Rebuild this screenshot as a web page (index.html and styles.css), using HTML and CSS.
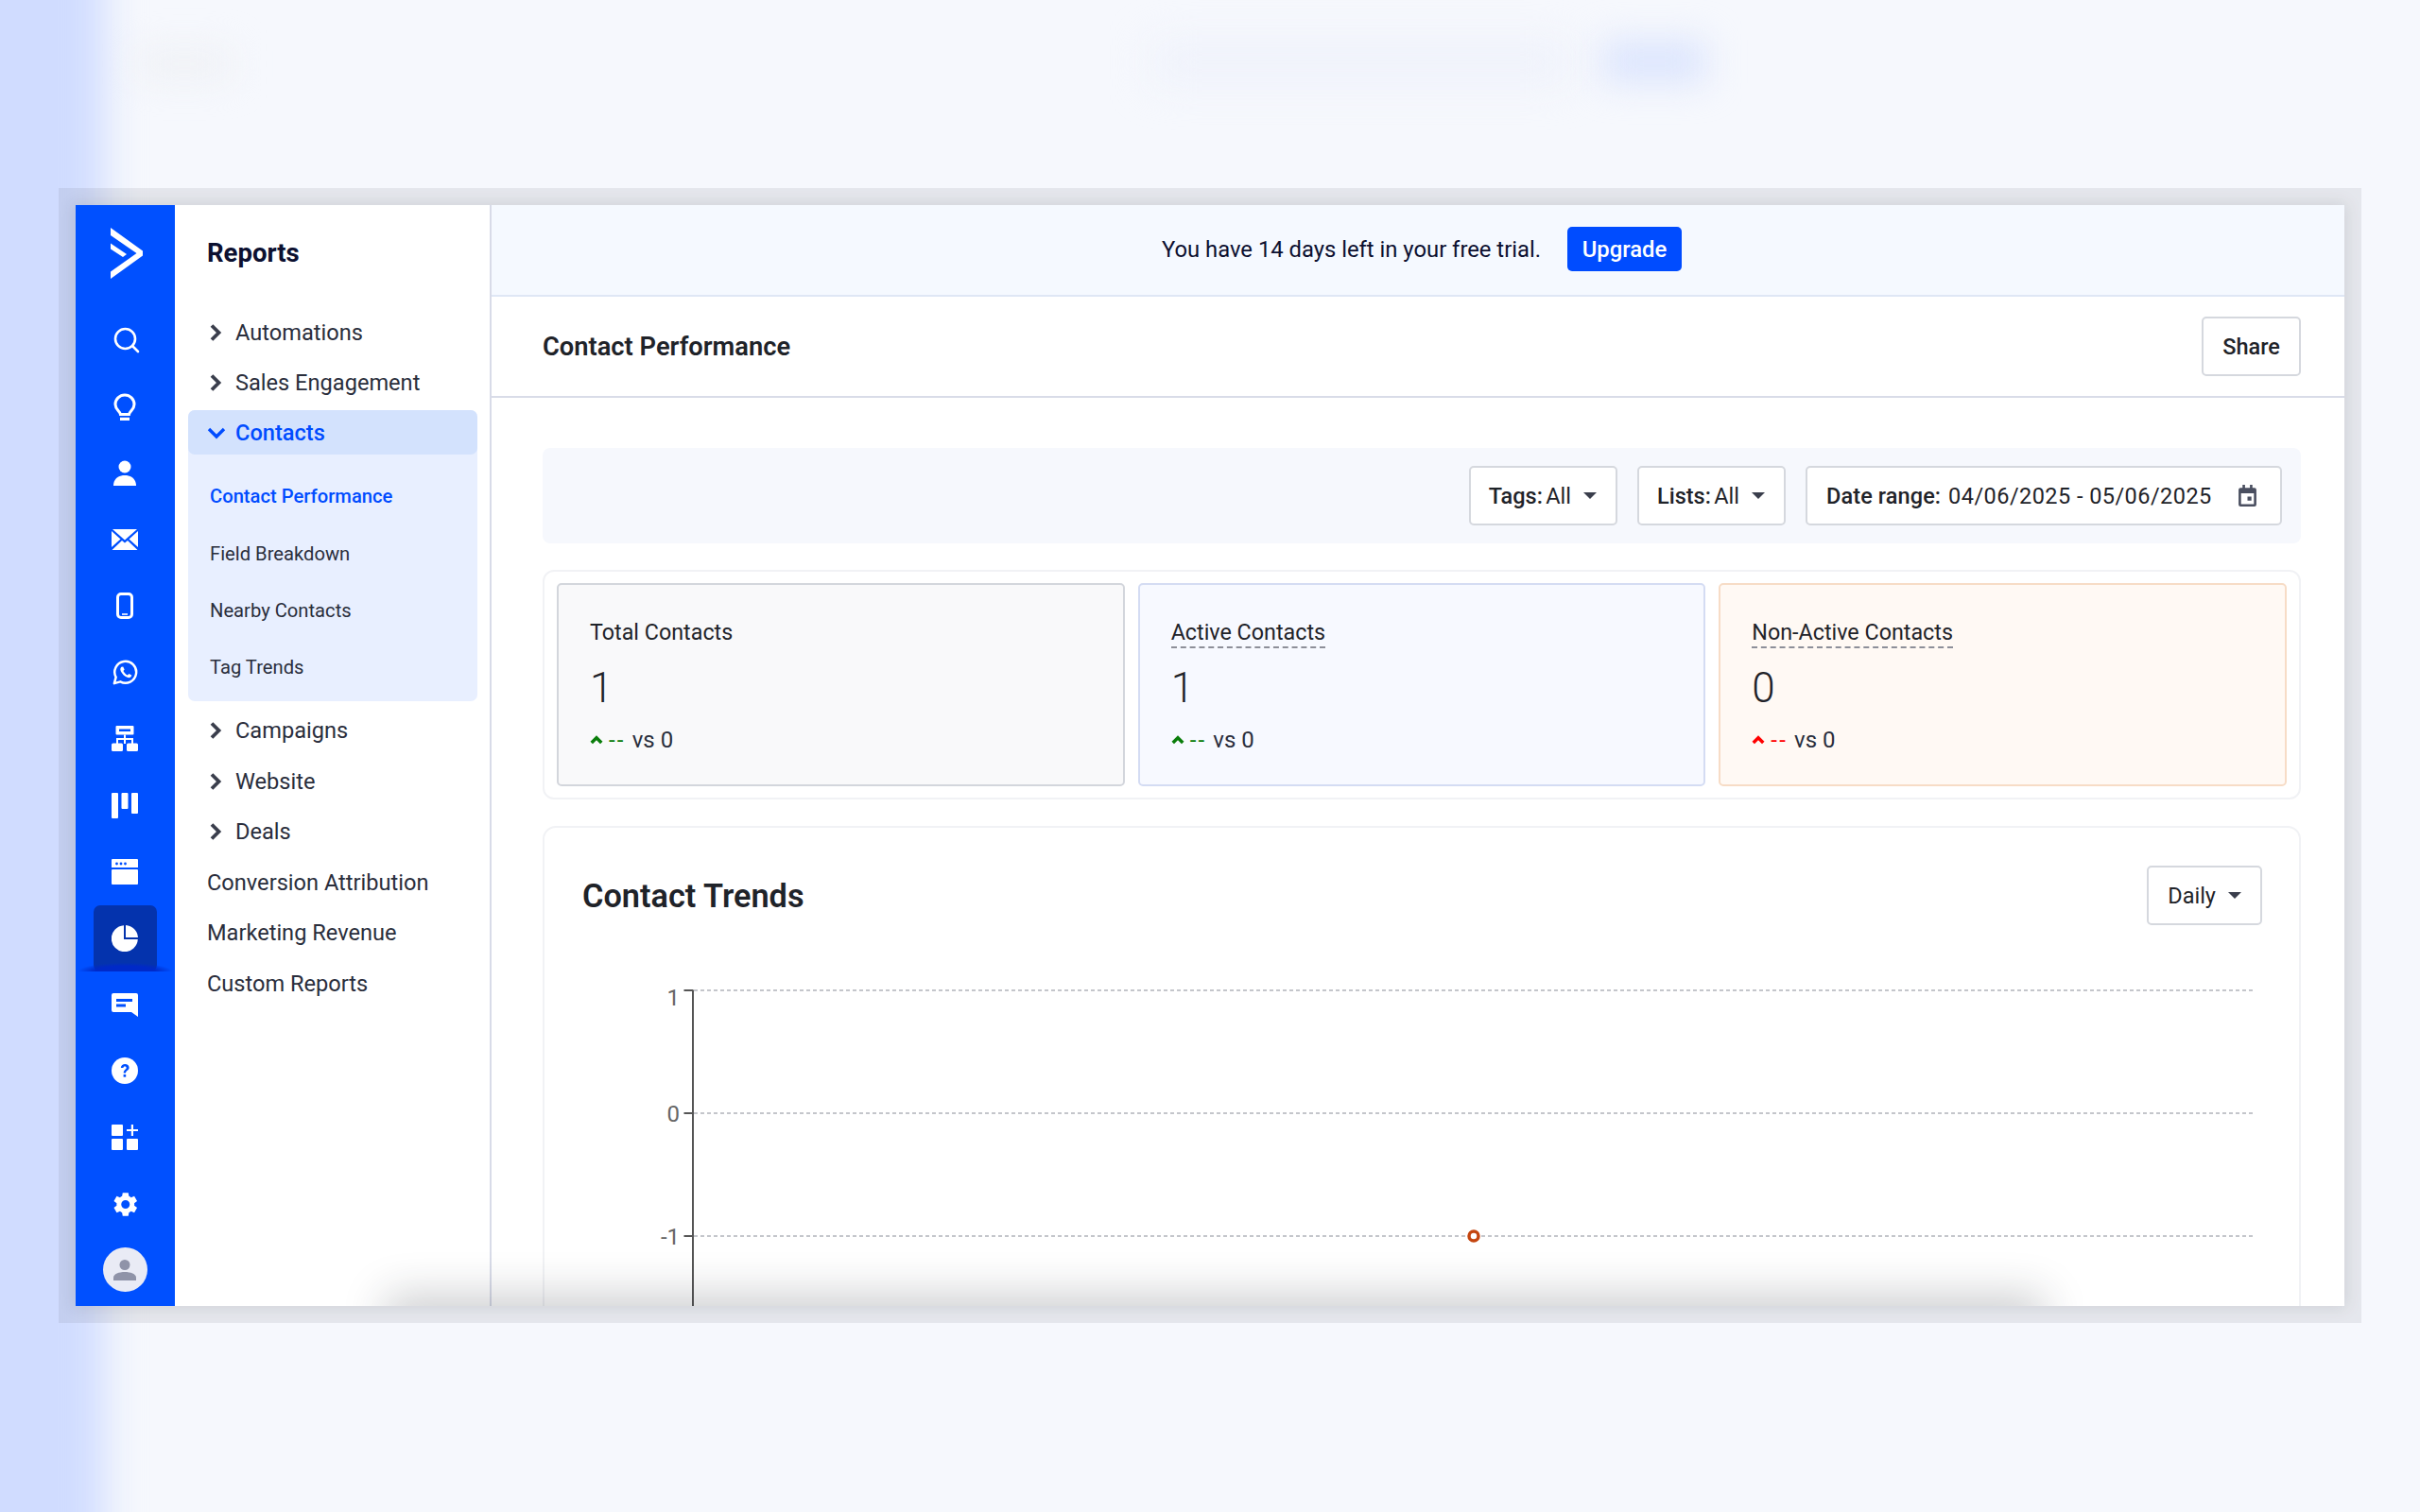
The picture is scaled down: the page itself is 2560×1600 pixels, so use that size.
FILE: index.html
```html
<!DOCTYPE html>
<html lang="en">
<head>
    <meta charset="UTF-8">
    <meta name="viewport" content="width=device-width, initial-scale=1.0">
    <title>Contact Performance</title>
    <link rel="stylesheet" href="styles.css">
</head>
<body>
    <!-- blurred page behind the card -->
    <div class="blur blur-rail"></div>
    <div class="blur blur-title"></div>
    <div class="blur blur-text"></div>
    <div class="blur blur-button"></div>

    <div class="card">
        <nav class="rail">
            <a class="rail-logo" href="#">
                <svg width="34" height="54" viewBox="0 0 34 54" fill="#fff"><path d="M0 0 34 24.5V29.5L0 54V46.5L27.5 27 0 8Z"/><path d="M0 16.5 17 28 13 31 0 22.5Z"/></svg>
            </a>
            <a class="rail-item rail-search" href="#">
                <svg width="30" height="30" viewBox="0 0 30 30" fill="none" stroke="#fff" stroke-width="2.6" stroke-linecap="round"><circle cx="13.5" cy="13.5" r="10.5"/><path d="M21.5 21.5 27 27"/></svg>
            </a>
            <a class="rail-item" href="#">
                <svg width="28" height="30" viewBox="0 -2 28 30" fill="none" stroke="#fff" stroke-width="3"><path d="M9.5 21.5C9 18 4 16.5 4 11A10 10 0 0 1 24 11C24 16.5 19 18 18.500 21.500Z"/><path d="M9 26.500H19" stroke-width="3.500"/></svg>
            </a>
            <a class="rail-item" href="#">
                <svg width="26" height="28" viewBox="0 0 26 28" fill="#fff"><circle cx="13" cy="7" r="6.500"/><path d="M1 27C1 20 6 16 13 16S25 20 25 27Z"/></svg>
            </a>
            <a class="rail-item" href="#">
                <svg width="28" height="22" viewBox="0 0 28 22" fill="#fff"><path d="M1 0H27L14 11.500Z"/><path d="M0 2V19L9.500 10.500Z"/><path d="M28 2V19L18.500 10.500Z"/><path d="M11 12 14 14.500 17 12 27.500 22H.5Z"/></svg>
            </a>
            <a class="rail-item" href="#">
                <svg width="18" height="28" viewBox="0 0 18 28" fill="none" stroke="#fff"><rect x="1.500" y="1.500" width="15" height="25" rx="3.500" stroke-width="3"/><path d="M6 23H12" stroke-width="1.600"/></svg>
            </a>
            <a class="rail-item" href="#">
                <svg width="27" height="27" viewBox="0 0 26 26" fill="none"><path d="M1.800 24.200 3.500 18A11 11 0 1 1 8 22.500Z" stroke="#fff" stroke-width="2.400" stroke-linejoin="round"/><path d="M9 7.500C7.500 9 7.700 11 9.500 13.500 11.500 16.500 14.500 18.500 17 18.500 18.500 18.500 19.500 17 19.500 16L16.800 14.500 15.300 15.800C13.500 15 11.800 13.200 11 11.500L12.200 10 10.800 7.200Z" fill="#fff"/></svg>
            </a>
            <a class="rail-item" href="#">
                <svg width="28" height="27" viewBox="0 0 28 27" fill="#fff"><path fill-rule="evenodd" d="M4.500 1A1 1 0 0 1 5.500 0H22.500A1 1 0 0 1 23.500 1V8.500A1 1 0 0 1 22.500 9.500H5.500A1 1 0 0 1 4.500 8.500ZM8 3.500V6H20V3.500Z"/><path d="M13 9.500H15V13H23V19H21V15H15V19H13V15H7V19H5V13H13Z"/><rect y="18.500" width="12" height="8.500" rx="1.500"/><rect x="16" y="18.500" width="12" height="8.500" rx="1.500"/></svg>
            </a>
            <a class="rail-item" href="#">
                <svg width="28" height="27" viewBox="0 0 28 27" fill="#fff"><rect width="7" height="27" rx="1"/><rect x="10.500" width="7" height="17" rx="1"/><rect x="21" width="7" height="22" rx="1"/></svg>
            </a>
            <a class="rail-item" href="#">
                <svg width="28" height="27" viewBox="0 0 28 27" fill="#fff"><path d="M1 0H27A1 1 0 0 1 28 1V9H0V1A1 1 0 0 1 1 0Z"/><rect y="11" width="28" height="16" rx="1"/><g fill="#0050ff"><circle cx="5.500" cy="5" r="1.400"/><circle cx="10" cy="5" r="1.400"/><circle cx="14.500" cy="5" r="1.400"/></g></svg>
            </a>
            <a class="rail-item rail-item-active" href="#">
                <svg width="28" height="28" viewBox="0 0 28 28" fill="#fff"><path d="M13 .2V15H27.800A14 14 0 1 1 13 .2Z"/><path d="M15 0A14 14 0 0 1 28 13H15Z"/></svg>
            </a>
            <a class="rail-item" href="#">
                <svg width="28" height="25" viewBox="0 0 28 25" fill="#fff" fill-rule="evenodd"><path d="M2 0H26A2 2 0 0 1 28 2V25L21 20H2A2 2 0 0 1 0 18V2A2 2 0 0 1 2 0ZM5 6V9H22V6ZM5 11.500V14.500H15V11.500Z"/></svg>
            </a>
            <a class="rail-item" href="#">
                <svg width="28" height="28" viewBox="0 0 28 28"><circle cx="14" cy="14" r="14" fill="#fff"/><path d="M9.800 11C10 8.300 12 7 14.200 7 16.800 7 18.600 8.500 18.600 10.700 18.600 13.600 15 13.800 15 16.500H12.700C12.700 12.800 15.700 12.700 15.700 10.900 15.700 10 15.100 9.400 14.100 9.400 13 9.400 12.500 10.100 12.400 11Z" fill="#0050ff"/><rect x="12.600" y="18" width="2.600" height="2.700" fill="#0050ff"/></svg>
            </a>
            <a class="rail-item" href="#">
                <svg width="28" height="27" viewBox="0 0 28 27" fill="#fff"><rect width="12" height="12" rx="1"/><rect y="15" width="12" height="12" rx="1"/><rect x="16" y="15" width="12" height="12" rx="1"/><path d="M20.800 0H23V4.900H28V7.100H23V12H20.800V7.100H16V4.900H20.800Z"/></svg>
            </a>
            <a class="rail-item" href="#">
                <svg width="31" height="31" viewBox="0 0 24 24" fill="#fff"><path d="M19.400 13a7.500 7.500 0 0 0 0-2l2.300-1.800-2.300-4-2.700 1.100a7.800 7.800 0 0 0-1.700-1L14.500 2.500h-4.600L9.400 5.300a7.800 7.800 0 0 0-1.700 1L5 5.200l-2.300 4L5 11a7.500 7.500 0 0 0 0 2l-2.300 1.800 2.300 4 2.700-1.100a7.800 7.800 0 0 0 1.700 1l.5 2.800h4.600l.5-2.800a7.800 7.800 0 0 0 1.700-1l2.700 1.100 2.300-4ZM12.200 15.500a3.500 3.500 0 1 1 0-7 3.500 3.500 0 0 1 0 7Z" fill-rule="evenodd"/></svg>
            </a>
            <a class="rail-avatar" href="#">
                <svg width="24" height="22" viewBox="0 0 24 22" fill="#8f93a8"><circle cx="12" cy="5.500" r="5.500"/><path d="M0 22V19C0 15 6 13 12 13S24 15 24 19V22Z"/></svg>
            </a>
        </nav>

        <aside class="sidebar">
            <h2 class="sidebar-title">Reports</h2>
            <ul class="menu">
                <li class="menu-item"><svg class="chev" viewBox="0 0 16 20"><path d="M5 2.500 12.500 10 5 17.500"/></svg>Automations</li>
                <li class="menu-item"><svg class="chev" viewBox="0 0 16 20"><path d="M5 2.500 12.500 10 5 17.500"/></svg>Sales Engagement</li>
            </ul>
            <div class="menu-open">
                <div class="menu-open-head"><svg class="chev-down" viewBox="0 0 20 14"><path d="M2 3 10 11 18 3"/></svg>Contacts</div>
                <a class="sub-item sub-item-active" href="#">Contact Performance</a>
                <a class="sub-item" href="#">Field Breakdown</a>
                <a class="sub-item" href="#">Nearby Contacts</a>
                <a class="sub-item" href="#">Tag Trends</a>
            </div>
            <ul class="menu">
                <li class="menu-item"><svg class="chev" viewBox="0 0 16 20"><path d="M5 2.500 12.500 10 5 17.500"/></svg>Campaigns</li>
                <li class="menu-item"><svg class="chev" viewBox="0 0 16 20"><path d="M5 2.500 12.500 10 5 17.500"/></svg>Website</li>
                <li class="menu-item"><svg class="chev" viewBox="0 0 16 20"><path d="M5 2.500 12.500 10 5 17.500"/></svg>Deals</li>
                <li class="menu-item">Conversion Attribution</li>
                <li class="menu-item">Marketing Revenue</li>
                <li class="menu-item">Custom Reports</li>
            </ul>
        </aside>

        <main class="main">
            <div class="trial">
                <span>You have 14 days left in your free trial.</span>
                <a class="upgrade" href="#">Upgrade</a>
            </div>
            <div class="title-bar">
                <h1>Contact Performance</h1>
                <button class="btn share">Share</button>
            </div>
            <div class="content">
                <div class="filters">
                    <button class="btn filter tight"><span><b>Tags:</b> All</span><i class="caret"></i></button>
                    <button class="btn filter tight"><span><b>Lists:</b> All</span><i class="caret"></i></button>
                    <button class="btn filter date"><b>Date range:</b><span class="dates">04/06/2025 - 05/06/2025</span>
                        <svg class="cal" viewBox="0 0 20 22" fill="#4a4f60" fill-rule="evenodd"><path d="M3 3H5V0H7.500V3H12.500V0H15V3H17A2 2 0 0 1 19 5V20A2 2 0 0 1 17 22H3A2 2 0 0 1 1 20V5A2 2 0 0 1 3 3ZM3.500 8.500V19.500H16.500V8.500ZM10 12H14V16H10Z"/></svg>
                    </button>
                </div>

                <div class="stats">
                    <div class="stat stat-grey">
                        <div class="stat-label"><span>Total Contacts</span></div>
                        <div class="stat-value">1</div>
                        <div class="stat-diff"><svg class="arrow up" viewBox="0 0 12 8"><path d="M1.500 6.500 6 2 10.500 6.500"/></svg><span class="up">--</span> vs 0</div>
                    </div>
                    <div class="stat stat-blue">
                        <div class="stat-label"><span class="dashed">Active Contacts</span></div>
                        <div class="stat-value">1</div>
                        <div class="stat-diff"><svg class="arrow up" viewBox="0 0 12 8"><path d="M1.500 6.500 6 2 10.500 6.500"/></svg><span class="up">--</span> vs 0</div>
                    </div>
                    <div class="stat stat-orange">
                        <div class="stat-label"><span class="dashed">Non-Active Contacts</span></div>
                        <div class="stat-value">0</div>
                        <div class="stat-diff"><svg class="arrow down" viewBox="0 0 12 8"><path d="M1.500 6.500 6 2 10.500 6.500"/></svg><span class="down">--</span> vs 0</div>
                    </div>
                </div>

                <section class="trends">
                    <div class="trends-head">
                        <h2>Contact Trends</h2>
                        <button class="btn filter"><span>Daily</span><i class="caret"></i></button>
                    </div>
                    <svg class="chart" width="1859" height="380" viewBox="0 -20 1859 380">
                        <g class="grid">
                            <path d="M158 3H1810"/>
                            <path d="M158 133H1810"/>
                            <path d="M158 263H1810"/>
                        </g>
                        <path class="axis" d="M157 3H147.500M157 133H147.500M157 263H147.500M157 2.500V360"/>
                        <g class="labels">
                            <text x="143" y="19">1</text>
                            <text x="143" y="142">0</text>
                            <text x="143" y="272">-1</text>
                        </g>
                        <circle class="point" cx="983" cy="263" r="5"/>
                    </svg>
                </section>
            </div>
        </main>
        <div class="bottom-fade"></div>
    </div>
</body>
</html>
```

FILE: styles.css
```css
* {
    margin: 0;
    padding: 0;
    box-sizing: border-box;
}

html, body {
    height: 1600px;
    overflow: hidden;
}

body {
    font-family: 'Roboto', sans-serif;
    background: #f6f8fd;
    padding: 217px 80px 0;
    color: #1d2130;
    position: relative;
}

a {
    color: inherit;
    text-decoration: none;
}

ul {
    list-style: none;
}

/* blurred background */
.blur {
    position: absolute;
}

.blur-rail {
    left: -80px;
    top: -80px;
    width: 190px;
    height: 1760px;
    background: #d0dcff;
    filter: blur(20px);
}

.blur-title {
    left: 145px;
    top: 52px;
    width: 100px;
    height: 32px;
    background: #eff1f5;
    filter: blur(18px);
}

.blur-text {
    left: 1220px;
    top: 46px;
    width: 440px;
    height: 40px;
    background: #eef1fb;
    filter: blur(22px);
}

.blur-button {
    left: 1695px;
    top: 42px;
    width: 110px;
    height: 46px;
    background: #dce5fd;
    filter: blur(18px);
}

/* main card */
.card {
    position: relative;
    display: flex;
    width: 2400px;
    height: 1165px;
    background: #fff;
    overflow: hidden;
    box-shadow: 0 0 0 18px rgba(70, 72, 78, 0.09), 0 0 16px 2px rgba(50, 54, 60, 0.12);
}

.bottom-fade {
    position: absolute;
    left: 340px;
    right: 330px;
    bottom: -30px;
    height: 30px;
    box-shadow: 0 0 45px 12px rgba(30, 35, 45, 0.22);
}

/* icon rail */
.rail {
    width: 105px;
    flex: none;
    background: #0050ff;
    padding: 24px 1px 0 0;
    display: flex;
    flex-direction: column;
    align-items: center;
}

.rail-logo {
    height: 54px;
    margin: 0 0 30px 3px;
}

.rail-item {
    width: 67px;
    height: 70.3px;
    flex: none;
    display: flex;
    align-items: center;
    justify-content: center;
}

.rail-search svg {
    margin-left: 4px;
}

.rail-item-active {
    position: relative;
    background: #0433ad;
    border-radius: 7px;
}

.rail-item-active::after {
    content: '';
    position: absolute;
    left: -16px;
    right: -16px;
    bottom: 0;
    height: 9px;
    background: radial-gradient(ellipse at 50% 100%, #0029c8 45%, rgba(0, 60, 230, 0) 72%);
}

.rail-item-active svg {
    position: relative;
    z-index: 1;
}

.rail-avatar {
    width: 47px;
    height: 47px;
    flex: none;
    margin-top: 11px;
    border-radius: 50%;
    background: #e9ebf5;
    display: flex;
    align-items: center;
    justify-content: center;
}

/* reports sidebar */
.sidebar {
    width: 335px;
    flex: none;
    border-right: 2px solid #d8dbe8;
    padding: 34px 13px 0 14px;
}

.sidebar-title {
    font-size: 27.5px;
    font-weight: 700;
    line-height: 34px;
    color: #0c1030;
    padding-left: 20px;
    margin-bottom: 40px;
}

.menu-item {
    display: flex;
    align-items: center;
    height: 53.6px;
    font-size: 23.6px;
    color: #2a2e3c;
    padding-left: 20px;
}

.chev {
    width: 16px;
    height: 20px;
    margin-right: 14px;
    fill: none;
    stroke: #3a3e4c;
    stroke-width: 3.8;
}

.menu-open {
    background: #e8efff;
    border-radius: 7px;
    height: 308px;
    margin-bottom: 4px;
    margin-top: 2px;
}

.menu-open-head {
    display: flex;
    align-items: center;
    height: 47px;
    background: #d3e2fd;
    border-radius: 7px;
    padding-left: 20px;
    font-size: 23.6px;
    font-weight: 500;
    color: #004cff;
    margin-bottom: 14px;
}

.chev-down {
    width: 20px;
    height: 14px;
    margin-right: 10px;
    fill: none;
    stroke: #004cff;
    stroke-width: 3.4;
}

.sub-item {
    display: flex;
    align-items: center;
    height: 60.3px;
    padding-left: 23px;
    font-size: 20.2px;
    color: #2a2e3c;
}

.sub-item-active {
    color: #004cff;
    font-weight: 500;
}

/* main column */
.main {
    flex: 1;
    min-width: 0;
}

.trial {
    height: 97px;
    background: #f5f9ff;
    border-bottom: 2px solid #dfe7f5;
    display: flex;
    align-items: center;
    justify-content: center;
    gap: 28px;
    font-size: 23.8px;
    color: #0c1030;
    padding-left: 8px;
    padding-bottom: 2px;
}

.upgrade {
    background: #004cff;
    color: #fff;
    font-weight: 500;
    border-radius: 5px;
    width: 121px;
    height: 47px;
    display: flex;
    align-items: center;
    justify-content: center;
}

.title-bar {
    height: 107px;
    border-bottom: 2px solid #d9dce8;
    display: flex;
    align-items: center;
    justify-content: space-between;
    padding: 0 46px 0 54px;
}

.title-bar h1 {
    font-size: 27.3px;
    font-weight: 600;
    color: #1f2329;
    padding-top: 1px;
}

.btn {
    font-family: inherit;
    font-size: 23.5px;
    color: #1f2329;
    background: #fff;
    border: 2px solid #d5d8de;
    border-radius: 5px;
    height: 63px;
    display: flex;
    align-items: center;
}

.share {
    width: 105px;
    justify-content: center;
    font-weight: 500;
}

.content {
    padding: 53px 46px 0 54px;
}

.filters {
    height: 101px;
    background: #f6f8fd;
    border-radius: 8px;
    display: flex;
    align-items: center;
    justify-content: flex-end;
    gap: 21px;
    padding-right: 20px;
    margin-bottom: 28px;
}

.filter {
    padding: 0 20px;
}

.tight {
    word-spacing: -2.500px;
    padding-left: 19px;
}

.filter b {
    font-weight: 500;
}

.caret {
    width: 0;
    height: 0;
    margin-left: 13px;
    border-left: 7px solid transparent;
    border-right: 7px solid transparent;
    border-top: 7px solid #3a3e4c;
}

.date {
    width: 504px;
    justify-content: flex-start;
    padding-right: 24px;
}

.date b {
    letter-spacing: 0.100px;
}

.dates {
    margin-left: 8px;
    letter-spacing: 0.450px;
}

.cal {
    width: 21px;
    height: 23px;
    margin-left: auto;
}

.stats {
    height: 243px;
    border: 2px solid #f1f2f5;
    border-radius: 12px;
    display: grid;
    grid-template-columns: repeat(3, 1fr);
    gap: 14px;
    padding: 12px 13px;
    margin-bottom: 28px;
}

.stat {
    border: 2px solid;
    border-radius: 5px;
    padding: 35px 33px 0;
}

.stat-grey {
    background: #f9f9fa;
    border-color: #d3d6dc;
}

.stat-blue {
    background: #f7f9ff;
    border-color: #d4dcf3;
}

.stat-orange {
    background: #fff9f4;
    border-color: #f7dcc6;
}

.stat-label {
    height: 32px;
    font-size: 23.3px;
    line-height: 30px;
    color: #1f2329;
}

.dashed {
    border-bottom: 2px dashed #8d8f99;
    display: inline-block;
}

.stat-value {
    font-size: 44px;
    font-weight: 300;
    line-height: 52px;
    margin-top: 16px;
    color: #1f2329;
}

.stat-diff {
    display: flex;
    align-items: center;
    font-size: 24px;
    margin-top: 15px;
    color: #2a2e3c;
}

.stat-diff span {
    margin-right: 7px;
    letter-spacing: 2.200px;
}

.arrow {
    width: 14px;
    height: 10px;
    margin-right: 6px;
    fill: none;
    stroke-width: 3;
}

.arrow.up {
    stroke: #0a7d0a;
}

.arrow.down {
    stroke: #f00;
}

span.up {
    color: #0a7d0a;
}

span.down {
    color: #f00;
}

/* trends chart */
.trends {
    border: 2px solid #f1f2f5;
    border-radius: 14px;
    padding: 40px 39px 0 40px;
    height: 560px;
}

.trends-head {
    display: flex;
    align-items: center;
    justify-content: space-between;
    margin-bottom: 46px;
}

.trends-head h2 {
    font-size: 34.3px;
    font-weight: 600;
    color: #1f2329;
}

.chart {
    display: block;
    margin-left: -40px;
}

.grid path {
    stroke: #c4c6cb;
    stroke-width: 2;
    stroke-dasharray: 4 3;
    fill: none;
}

.axis {
    stroke: #555;
    stroke-width: 2;
    fill: none;
}

.labels text {
    font-size: 24px;
    fill: #666;
    text-anchor: end;
}

.point {
    fill: #fff;
    stroke: #c4450f;
    stroke-width: 3.500;
}
```
